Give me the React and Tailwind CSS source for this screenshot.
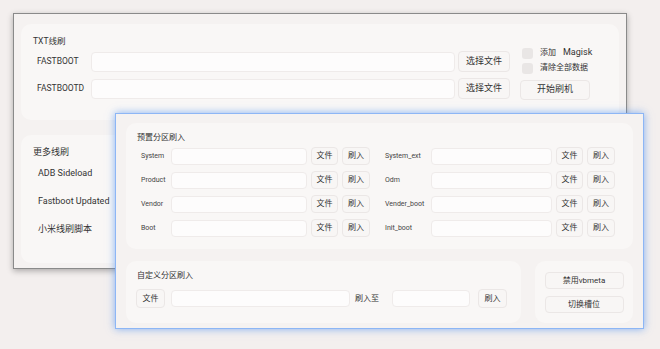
import React from 'react';

const font = { fontFamily: 'Roboto, "Noto Sans CJK SC", sans-serif' };

function Btn({ children, className = '' }) {
  return (
    <div className={`flex items-center justify-center rounded-[4px] border border-[#ebe7e6] bg-[#f8f6f5] text-[#333] ${className}`}>
      {children}
    </div>
  );
}

function Field({ className = '' }) {
  return <div className={`rounded-[4px] border border-[#efebea] bg-[#fdfcfc] ${className}`} />;
}

function Row({ label, labelW, inputW }) {
  return (
    <div className="flex items-center h-[18px]">
      <span className="shrink-0 text-[7px] text-[#444] pl-[4px]" style={{ width: labelW }}>{label}</span>
      <Field className={`h-[17px] shrink-0 ${inputW}`} />
      <Btn className="ml-[4px] h-[18px] w-[27px] text-[8px]">文件</Btn>
      <Btn className="ml-[4px] h-[18px] w-[28px] text-[8px]">刷入</Btn>
    </div>
  );
}

export default function App() {
  return (
    <div className="relative w-[660px] h-[349px] overflow-hidden bg-[#f3efee]" style={font}>
      {/* back window */}
      <div className="absolute left-[13px] top-[13px] w-[614px] h-[256px] bg-[#f5f2f1] border border-[#8a8a8a] shadow-[0_2px_6px_rgba(0,0,0,0.3)] px-[7px] pt-[10px]">
        <div className="flex h-[96px] rounded-[10px] bg-[#f9f7f6] pl-[12px] pt-[11px]">
          <div className="flex flex-col">
            <span className="text-[8.5px] leading-[12px] text-[#333]">TXT线刷</span>
            <div className="mt-[4px] flex items-center">
              <span className="w-[58px] pl-[4px] text-[8.5px] text-[#333]">FASTBOOT</span>
              <Field className="h-[20px] w-[364px]" />
              <Btn className="ml-[3px] h-[21px] w-[52px] text-[9px]">选择文件</Btn>
            </div>
            <div className="mt-[6px] flex items-center">
              <span className="w-[58px] pl-[4px] text-[8.5px] text-[#333]">FASTBOOTD</span>
              <Field className="h-[20px] w-[364px]" />
              <Btn className="ml-[3px] h-[21px] w-[52px] text-[9px]">选择文件</Btn>
            </div>
          </div>
          <div className="ml-[10px] flex flex-col pt-[12px]">
            <div className="flex items-center h-[12px] pl-[2px]">
              <div className="h-[11px] w-[11px] rounded-[3px] bg-[#e9e6e5]" />
              <span className="ml-[7px] text-[8px] text-[#333]">添加</span>
              <span className="ml-[7px] text-[9px] text-[#333]">Magisk</span>
            </div>
            <div className="mt-[3px] flex items-center h-[12px] pl-[2px]">
              <div className="h-[11px] w-[11px] rounded-[3px] bg-[#e9e6e5]" />
              <span className="ml-[7px] text-[8px] text-[#333]">清除全部数据</span>
            </div>
            <Btn className="mt-[6px] h-[20px] w-[70px] text-[9px]">开始刷机</Btn>
          </div>
        </div>
        <div className="mt-[15px] h-[128px] w-[400px] rounded-[10px] bg-[#f9f7f6] pl-[12px] pt-[11px] text-[#333]">
          <div className="text-[9px] leading-[12px]">更多线刷</div>
          <div className="mt-[9px] pl-[5px] text-[9px] leading-[12px]">ADB Sideload</div>
          <div className="mt-[16px] pl-[5px] text-[9px] leading-[12px]">Fastboot Updated</div>
          <div className="mt-[16px] pl-[5px] text-[9px] leading-[12px]">小米线刷脚本</div>
        </div>
      </div>

      {/* front window */}
      <div className="absolute left-[115px] top-[113px] w-[529px] h-[216px] bg-[#f5f2f1] border-[1.5px] border-[#8db6f5] shadow-[0_0_8px_rgba(70,140,240,0.65)] px-[10px] pt-[9px]">
        <div className="h-[126px] rounded-[10px] bg-[#f9f7f6] pl-[11px] pt-[9px]">
          <div className="text-[8px] leading-[11px] text-[#333]">预置分区刷入</div>
          <div className="mt-[4px] flex">
            <div className="flex flex-col gap-[6px]">
              <Row label="System" labelW="34px" inputW="w-[136px]" />
              <Row label="Product" labelW="34px" inputW="w-[136px]" />
              <Row label="Vendor" labelW="34px" inputW="w-[136px]" />
              <Row label="Boot" labelW="34px" inputW="w-[136px]" />
            </div>
            <div className="ml-[11px] flex flex-col gap-[6px]">
              <Row label="System_ext" labelW="50px" inputW="w-[121px]" />
              <Row label="Odm" labelW="50px" inputW="w-[121px]" />
              <Row label="Vender_boot" labelW="50px" inputW="w-[121px]" />
              <Row label="Init_boot" labelW="50px" inputW="w-[121px]" />
            </div>
          </div>
        </div>
        <div className="mt-[12px] flex">
          <div className="h-[62px] w-[395px] rounded-[10px] bg-[#f9f7f6] pl-[10px] pt-[9px]">
            <div className="text-[8px] leading-[11px] text-[#333] pl-[1px]">自定义分区刷入</div>
            <div className="mt-[8px] flex items-center">
              <Btn className="h-[19px] w-[29px] text-[8px]">文件</Btn>
              <Field className="ml-[6px] h-[17px] w-[179px]" />
              <span className="ml-[5px] w-[37px] text-[8px] text-[#333]">刷入至</span>
              <Field className="h-[17px] w-[78px]" />
              <Btn className="ml-[8px] h-[19px] w-[29px] text-[8px]">刷入</Btn>
            </div>
          </div>
          <div className="ml-[14px] flex h-[62px] w-[98px] flex-col items-center rounded-[10px] bg-[#f9f7f6] pt-[11px]">
            <Btn className="h-[17px] w-[79px] text-[8px]">禁用vbmeta</Btn>
            <Btn className="mt-[7px] h-[17px] w-[79px] text-[8px]">切换槽位</Btn>
          </div>
        </div>
      </div>
    </div>
  );
}
